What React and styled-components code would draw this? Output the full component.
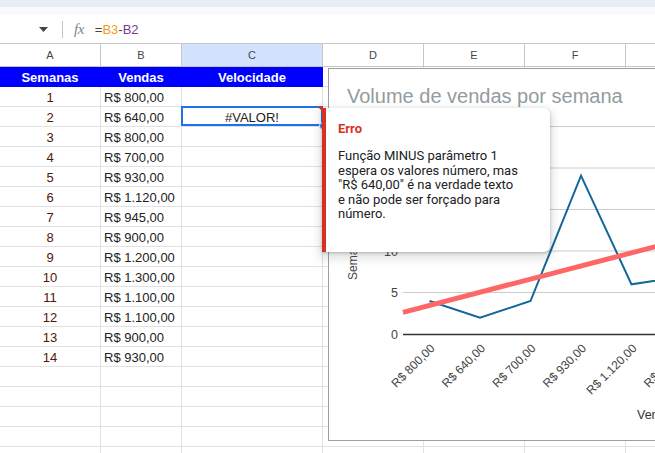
import React from 'react';
import styled, { createGlobalStyle } from 'styled-components';

const GlobalStyle = createGlobalStyle`
  body {
    margin: 0;
    background: #fff;
    overflow: hidden;
    font-family: "Liberation Sans", Arial, sans-serif;
  }
`;

const Page = styled.div`
  position: relative;
  width: 655px;
  height: 453px;
  overflow: hidden;
`;

const TopBand = styled.div`
  height: 7px;
  background: #e9eef6;
`;

const SubBand = styled.div`
  height: 8px;
  background: #f8fafd;
`;

const FormulaBar = styled.div`
  height: 29px;
  box-sizing: border-box;
  border-bottom: 1px solid #c4c7c5;
  display: flex;
  align-items: center;
  padding-left: 39px;
`;

const Separator = styled.div`
  width: 1px;
  height: 17px;
  background: #c4c7c5;
  margin-left: 14px;
`;

const FxLabel = styled.span`
  margin-left: 11px;
  font-family: "Liberation Serif", serif;
  font-style: italic;
  font-size: 15px;
  color: #80868b;
  letter-spacing: -0.5px;
`;

const Formula = styled.span`
  margin-left: 11px;
  font-size: 13px;
  color: #444;
`;

const Ref = styled.span`
  color: ${(p) => p.$color};
`;

const Sheet = styled.div`
  display: grid;
  grid-template-columns: 101px 81px 141px 101px 101px 101px 101px;
`;

const ColHead = styled.div`
  height: 23px;
  box-sizing: border-box;
  border-right: 1px solid #c4c7c5;
  border-bottom: 1px solid #c4c7c5;
  background: ${(p) => (p.$selected ? '#d3e3fd' : '#fff')};
  display: flex;
  align-items: center;
  justify-content: center;
  font-size: 11px;
  color: #444746;
`;

const Cell = styled.div`
  position: relative;
  height: 20px;
  box-sizing: border-box;
  border-right: 1px solid #e1e1e1;
  border-bottom: 1px solid #e1e1e1;
  padding: 3px 3px 0;
  line-height: 16px;
  font-size: 13px;
  white-space: nowrap;
  text-align: ${(p) => p.$align || 'left'};
  color: ${(p) => p.$color || '#222'};

  ${(p) =>
    p.$active &&
    `
    &::after {
      content: '';
      position: absolute;
      left: -1px;
      top: -1px;
      right: -1px;
      bottom: 0;
      border: 2px solid #1a73e8;
    }
  `}
`;

const HeadCell = styled(Cell)`
  background: #0000ff;
  border-color: #0000ff;
  color: #fff;
  font-weight: 700;
  text-align: center;
`;

const ErrorMark = styled.span`
  position: absolute;
  right: -1px;
  top: -1px;
  width: 0;
  height: 0;
  border-top: 6px solid #d93025;
  border-left: 6px solid transparent;
  z-index: 2;
`;

const FillHandle = styled.span`
  position: absolute;
  right: -5px;
  bottom: -4px;
  width: 6px;
  height: 6px;
  border-radius: 50%;
  background: #1a73e8;
  border: 1px solid #fff;
  z-index: 2;
`;

const ChartCard = styled.div`
  position: absolute;
  left: 328px;
  top: 68px;
  width: 340px;
  height: 373px;
  box-sizing: border-box;
  border: 1px solid #9e9e9e;
  background: #fff;
  z-index: 3;
`;

const ChartSvg = styled.svg`
  display: block;
  overflow: visible;
  font-family: "Liberation Sans", Arial, sans-serif;
`;

const ErrorTip = styled.div`
  position: absolute;
  left: 322px;
  top: 108px;
  width: 228px;
  height: 144px;
  box-sizing: border-box;
  background: #fff;
  border-left: 4px solid #d93025;
  border-radius: 0 6px 6px 0;
  box-shadow: 0 1px 3px rgba(60, 64, 67, 0.3), 0 4px 8px 3px rgba(60, 64, 67, 0.15);
  padding: 13px 12px 0 12px;
  font-family: Roboto, "Liberation Sans", sans-serif;
  z-index: 4;
`;

const TipTitle = styled.div`
  color: #d93025;
  font-weight: 700;
  font-size: 13px;
  line-height: 16px;
`;

const TipBody = styled.div`
  margin-top: 12px;
  font-size: 13px;
  line-height: 14.6px;
  color: #202124;
`;

const vendas = [
  '800,00', '640,00', '800,00', '700,00', '930,00', '1.120,00', '945,00',
  '900,00', '1.200,00', '1.300,00', '1.100,00', '1.100,00', '900,00', '930,00',
];

const columns = ['A', 'B', 'C', 'D', 'E', 'F', 'G'];

// upper tick labels sit under the error tooltip, only the low ones show
const gridY = [126.5, 168, 209.5, 251, 292.5];
const yLabels = [
  { v: '0', y: 334.5 },
  { v: '5', y: 292.5 },
  { v: '10', y: 251 },
];
const categories = [
  { x: 429.5, label: 'R$ 800,00' },
  { x: 480, label: 'R$ 640,00' },
  { x: 530.5, label: 'R$ 700,00' },
  { x: 581, label: 'R$ 930,00' },
  { x: 631.5, label: 'R$ 1.120,00' },
  { x: 682, label: 'R$ 945,00' },
];
const series = '429.5,301 480,317.7 530.5,301 581,175.7 631.5,284.3 682,276.5';

const Chart = () => (
  <ChartCard>
    <ChartSvg width="340" height="373">
      <g transform="translate(-329,-69)">
        <text x="347" y="103" fontSize="20" fill="#939ba1">
          Volume de vendas por semana
        </text>
        {gridY.map((y) => (
          <line key={y} x1="403" x2="700" y1={y} y2={y} stroke="#cccccc" strokeWidth="1" />
        ))}
        <line x1="403" x2="700" y1="334.5" y2="334.5" stroke="#333" strokeWidth="1.3" />
        {yLabels.map((l) => (
          <text key={l.v} x="398" y={l.y + 4.5} fontSize="12.5" fill="#444" textAnchor="end">
            {l.v}
          </text>
        ))}
        <text x="357" y="280" fontSize="12" fill="#444" transform="rotate(-90 357 280)">
          Semanas
        </text>
        {categories.map((c) => {
          const ax = c.x + 6;
          const ay = 349;
          return (
            <text
              key={c.label}
              x={ax}
              y={ay}
              fontSize="12"
              fill="#444"
              textAnchor="end"
              transform={`rotate(-45 ${ax} ${ay})`}
            >
              {c.label}
            </text>
          );
        })}
        <text x="637" y="419" fontSize="12.5" fill="#333">
          Vendas
        </text>
        <polyline points={series} fill="none" stroke="#10679a" strokeWidth="2" strokeLinejoin="miter" />
        <line x1="403" y1="312.3" x2="700" y2="235" stroke="#ff6666" strokeWidth="5" />
      </g>
    </ChartSvg>
  </ChartCard>
);

const App = () => {
  const emptyRows = [0, 1, 2, 3, 4];
  return (
    <Page>
      <GlobalStyle />
      <TopBand />
      <SubBand />
      <FormulaBar>
        <svg width="9" height="5" viewBox="0 0 9 5">
          <path d="M0 0h9L4.5 5z" fill="#444" />
        </svg>
        <Separator />
        <FxLabel>fx</FxLabel>
        <Formula>
          =<Ref $color="#f7981d">B3</Ref>-<Ref $color="#7e3794">B2</Ref>
        </Formula>
      </FormulaBar>

      <Sheet>
        {columns.map((c) => (
          <ColHead key={c} $selected={c === 'C'}>
            {c}
          </ColHead>
        ))}

        <HeadCell>Semanas</HeadCell>
        <HeadCell>Vendas</HeadCell>
        <HeadCell>Velocidade</HeadCell>
        <Cell />
        <Cell />
        <Cell />
        <Cell />

        {vendas.map((v, i) => (
          <React.Fragment key={i}>
            <Cell $align="center" $color="#4f1608">
              {i + 1}
            </Cell>
            <Cell>R$ {v}</Cell>
            {i === 1 ? (
              <Cell $align="center" $active>
                #VALOR!
                <ErrorMark />
                <FillHandle />
              </Cell>
            ) : (
              <Cell />
            )}
            <Cell />
            <Cell />
            <Cell />
            <Cell />
          </React.Fragment>
        ))}

        {emptyRows.map((r) => (
          <React.Fragment key={`e${r}`}>
            {columns.map((c) => (
              <Cell key={c} />
            ))}
          </React.Fragment>
        ))}
      </Sheet>

      <Chart />

      <ErrorTip>
        <TipTitle>Erro</TipTitle>
        <TipBody>
          Função MINUS parâmetro 1<br />
          espera os valores número, mas<br />
          "R$ 640,00" é na verdade texto<br />
          e não pode ser forçado para<br />
          número.
        </TipBody>
      </ErrorTip>
    </Page>
  );
};

export default App;
